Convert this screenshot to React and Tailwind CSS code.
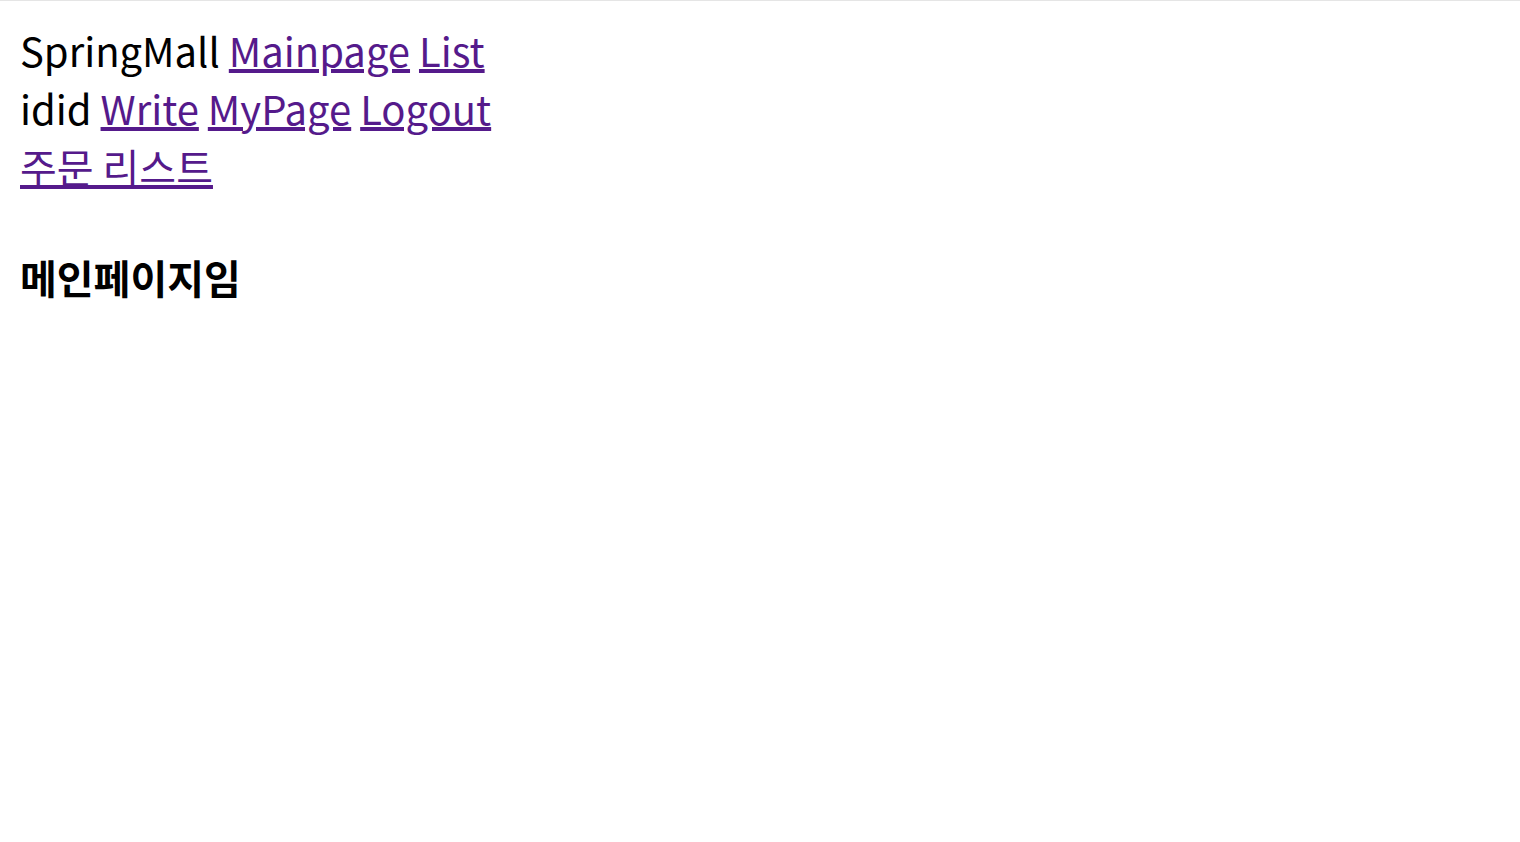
export default function App() {
  return (
    <div className="min-h-screen bg-white border-t border-[#e5e5e5] px-[20px] pt-[20px] text-black text-[40px] leading-[58px]">
      <div className="font-['Noto_Sans_CJK_KR',sans-serif]">
        <div>
          SpringMall <a href="#" className="text-[#551a8b] underline">Mainpage</a>{" "}
          <a href="#" className="text-[#551a8b] underline">List</a>
        </div>
        <div>
          idid <a href="#" className="text-[#551a8b] underline">Write</a>{" "}
          <a href="#" className="text-[#551a8b] underline">MyPage</a>{" "}
          <a href="#" className="text-[#551a8b] underline">Logout</a>
        </div>
        <div>
          <a href="#" className="text-[#551a8b] underline">주문 리스트</a>
        </div>
        <h3 className="font-bold mt-[53px]">메인페이지임</h3>
      </div>
    </div>
  );
}
